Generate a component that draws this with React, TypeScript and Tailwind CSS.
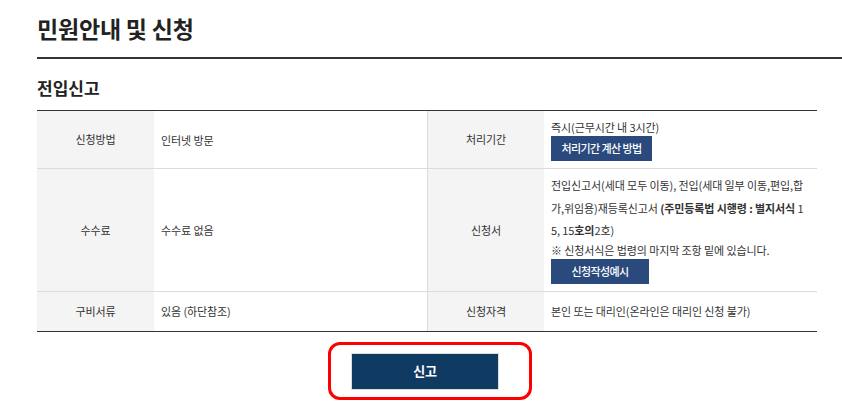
import React from "react";

// 민원안내 – 전입신고 상세
const font = { fontFamily: '"Noto Sans CJK KR", "Noto Sans", sans-serif' };

const Label: React.FC<{ children: React.ReactNode }> = ({ children }) => (
  <div className="flex items-center justify-center bg-[#f4f4f4] text-[#333]">{children}</div>
);

const NavyButton: React.FC<{ children: React.ReactNode; width: string }> = ({ children, width }) => (
  <div
    className={`${width} flex h-[25px] items-center justify-center bg-[#2a4a7e] text-[11px] font-medium tracking-[-0.6px] text-white`}
  >
    {children}
  </div>
);

export default function App() {
  return (
    <div className="h-[409px] w-[842px] overflow-hidden bg-white pl-[37px] text-[11px] tracking-[-0.1px] text-[#333]" style={font}>
      {/* 페이지 제목 */}
      <div className="border-b-2 border-[#333] pt-[13px] pb-[14px]">
        <h2 className="text-[23px] leading-[30px] font-bold tracking-[-0.2px] text-[#222]">민원안내 및 신청</h2>
      </div>

      <div className="w-[780px]">
        <h3 className="pt-[18px] pb-[11px] text-[17px] leading-[22px] font-bold tracking-[0px] text-[#222]">전입신고</h3>

        {/* 상세 표 */}
        <div className="border-t border-b border-[#333]">
          <div className="grid grid-cols-[117px_273px_117px_273px] border-b border-[#dcdcdc]">
            <Label>신청방법</Label>
            <div className="flex items-center px-[7px] leading-[18px]">인터넷 방문</div>
            <div className="border-l border-[#dcdcdc]">
              <div className="flex h-full items-center justify-center bg-[#f4f4f4]">처리기간</div>
            </div>
            <div className="px-[7px] py-[7px]">
              <div className="leading-[18px]">즉시(근무시간 내 3시간)</div>
              <NavyButton width="w-[101px]">처리기간 계산 방법</NavyButton>
            </div>
          </div>

          <div className="grid grid-cols-[117px_273px_117px_273px] border-b border-[#dcdcdc]">
            <Label>수수료</Label>
            <div className="flex items-center px-[7px] leading-[18px]">수수료 없음</div>
            <div className="border-l border-[#dcdcdc]">
              <div className="flex h-full items-center justify-center bg-[#f4f4f4]">신청서</div>
            </div>
            <div className="px-[7px] pt-[5px] pb-[7px]">
              <p className="break-all leading-[22.5px]">
                전입신고서(세대 모두 이동), 전입(세대 일부 이동,편입,합가,위임용)재등록신고서{" "}
                <b className="font-bold">(주민등록법 시행령 : 별지서식</b> 15, 15<b className="font-bold">호의</b>2호)
              </p>
              <p className="leading-[16px]">※ 신청서식은 법령의 마지막 조항 밑에 있습니다.</p>
              <div className="mt-[1px]">
                <NavyButton width="w-[98px]">신청작성예시</NavyButton>
              </div>
            </div>
          </div>

          <div className="grid h-[39px] grid-cols-[117px_273px_117px_273px]">
            <Label>구비서류</Label>
            <div className="flex items-center px-[7px]">있음 (하단참조)</div>
            <div className="border-l border-[#dcdcdc]">
              <div className="flex h-full items-center justify-center bg-[#f4f4f4]">신청자격</div>
            </div>
            <div className="flex items-center px-[7px]">본인 또는 대리인(온라인은 대리인 신청 불가)</div>
          </div>
        </div>

        {/* 신고 버튼 */}
        <div className="mt-[10px] flex justify-center">
          <div className="ml-[6px] rounded-[12px] border-[3px] border-[#f00] pt-[8px] pr-[30px] pb-[7px] pl-[20px]">
            <button className="flex h-[37px] w-[148px] items-center justify-center border border-[#ddd] bg-[#0f3a62] text-[13px] font-bold text-white">
              신고
            </button>
          </div>
        </div>
      </div>
    </div>
  );
}
